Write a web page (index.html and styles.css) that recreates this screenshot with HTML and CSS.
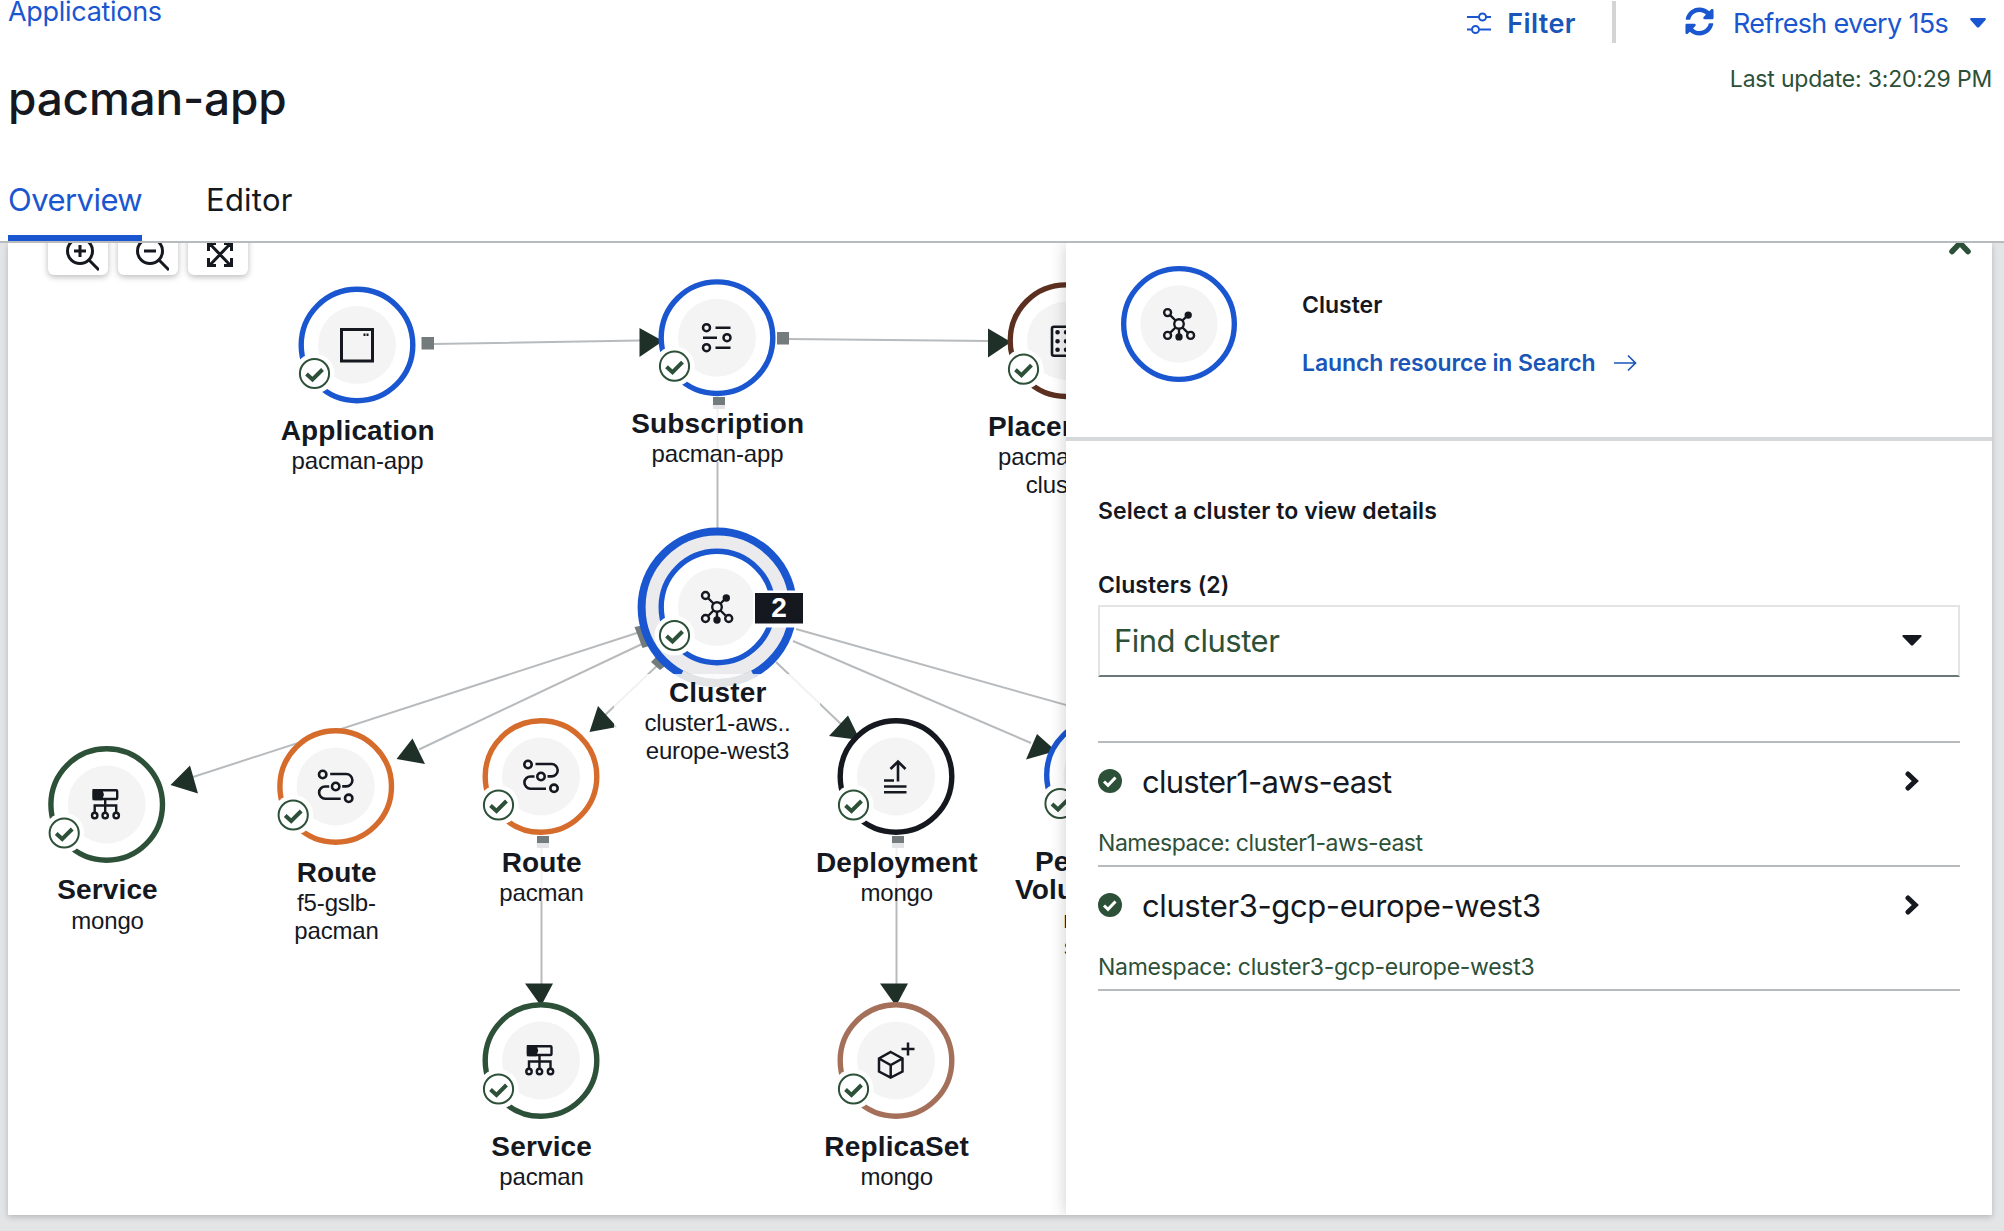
FILE: index.html
```html
<!DOCTYPE html>
<html lang="en">
<head>
<meta charset="utf-8">
<title>pacman-app</title>
<link rel="stylesheet" href="styles.css">
</head>
<body>
<header class="page-header">
  <div class="heading">
    <a class="breadcrumb">Applications</a>
    <h1 class="title">pacman-app</h1>
    <nav class="tabs">
      <a class="tab tab-active">Overview</a>
      <a class="tab tab-editor">Editor</a>
    </nav>
  </div>
  <div class="tools">
    <div class="actions">
      <svg class="icon-filter" width="26" height="24" viewBox="0 0 26 24" fill="none" stroke="currentColor" stroke-width="2"><path d="M1 6H12.500M20 6H25M1 18.500H5.500M13.500 18.500H25"/><circle cx="16.500" cy="6" r="3.500"/><circle cx="9.500" cy="18.500" r="3.500"/></svg>
      <span class="filter">Filter</span>
      <span class="separator"></span>
      <svg class="icon-sync" width="29" height="29" viewBox="0 0 512 512" fill="currentColor"><path d="M370.720 133.280C339.458 104.008 298.888 87.962 255.848 88c-77.458.068-144.328 53.178-162.791 126.850-1.344 5.363-6.122 9.150-11.651 9.150H24.103c-7.498 0-13.194-6.807-11.807-14.176C33.933 94.924 134.813 8 256 8c66.448 0 126.791 26.136 171.315 68.685L463.030 40.970C478.149 25.851 504 36.559 504 57.941V192c0 13.255-10.745 24-24 24H345.941c-21.382 0-32.090-25.851-16.971-40.971l41.750-41.749zM32 296h134.059c21.382 0 32.090 25.851 16.971 40.971l-41.750 41.750c31.262 29.273 71.835 45.319 114.876 45.280 77.418-.070 144.315-53.144 162.787-126.849 1.344-5.363 6.122-9.150 11.651-9.150h57.304c7.498 0 13.194 6.807 11.807 14.176C478.067 417.076 377.187 504 256 504c-66.448 0-126.791-26.136-171.315-68.685L48.970 471.030C33.851 486.149 8 475.441 8 454.059V320c0-13.255 10.745-24 24-24z"/></svg>
      <span class="refresh">Refresh every 15s</span>
      <svg class="icon-caret" width="16" height="10" viewBox="0 0 16 10" fill="currentColor"><path d="M1 0H15Q16.500.5 15.500 2L9 9.300Q8 10.200 7 9.300L.5 2Q-.5.5 1 0Z"/></svg>
    </div>
    <div class="updated">Last update: 3:20:29 PM</div>
  </div>
</header>

<main class="content">
  <section class="card">
    <div class="canvas">
      <div class="zoom-tools">
        <button class="tool" aria-label="Zoom in"><svg width="34" height="34" viewBox="0 0 34 34" fill="none" stroke="currentColor" stroke-width="3"><circle cx="15" cy="14" r="12.500"/><path d="M24 23L34 33M9 14H21M15 8V20"/></svg></button>
        <button class="tool" aria-label="Zoom out"><svg width="34" height="34" viewBox="0 0 34 34" fill="none" stroke="currentColor" stroke-width="3"><circle cx="15" cy="14" r="12.500"/><path d="M24 23L34 33M9 14H21"/></svg></button>
        <button class="tool" aria-label="Fit to screen"><svg width="34" height="34" viewBox="2 -1 34 34" fill="none" stroke="currentColor" stroke-width="3"><path d="M6 5L28 28M28 5L6 28M5.500 13V5.500H13M21 5.500H28.500V13M28.500 20V27.500H21M13 27.500H5.500V20"/></svg></button>
      </div>
      <svg class="graph" width="1058" height="972" viewBox="8 243 1058 972">
        <defs>
          <g id="base"><circle r="55.800" fill="#fff" stroke="currentColor" stroke-width="5.400"/><circle r="39" fill="#f4f4f5"/></g>
          <g id="ok"><circle cx="-42.500" cy="28.500" r="20" fill="#fff"/><circle cx="-42.500" cy="28.500" r="14.600" fill="#fff" stroke="#2d5038" stroke-width="2"/><path d="M-50.500 29L-44.500 34.500L-34.500 24.500" fill="none" stroke="#2d5038" stroke-width="4"/></g>
          <g id="i-cluster" fill="none" stroke="#15181f" stroke-width="2.400"><path d="M-8.500-8.500L-3.500-3.500M3.500-3.500L9-9M-3.500 3.500L-8.500 8.500M3.500 3.500L8.500 8.500M0 4.500V12"/><circle r="4.800"/><circle cx="-11.500" cy="-11.500" r="3.500"/><circle cx="-11.500" cy="11.500" r="3.500"/><circle cx="11.700" cy="11.500" r="3.500"/><circle cx="9.300" cy="-9" r="2.500" fill="#15181f"/><circle cy="13" r="2.500" fill="#15181f"/></g>
          <g id="i-service" fill="none" stroke="#15181f" stroke-width="2.400"><rect x="-13" y="-14.300" width="23.500" height="8.800" rx="1"/><path d="M-13-14.300h7.500l1.500 4.400-1.500 4.400h-7.500z" fill="#15181f"/><path d="M-1.500-5V8M-12 8V1H9.500V8"/><circle cx="-12" cy="11" r="2.700"/><circle cx="-1.500" cy="11" r="2.700"/><circle cx="9.500" cy="11" r="2.700"/></g>
          <g id="i-route" fill="none" stroke="#15181f" stroke-width="2.600"><circle cx="-13" cy="-12" r="3.700"/><circle r="3.700"/><circle cx="13" cy="11.800" r="3.700"/><path d="M-5.500-12.500H10.500a6.200 6.200 0 0 1 0 12.400H6.500M-6.500 0H-10.500a6 6 0 0 0 0 12.200H5"/></g>
        </defs>

        <g class="edges">
          <path d="M433 344L640 340.500M788 339L989 341M717.500 405V530M640 632L193 777M642 644L419 749.500M661 662L603 717M776 662L842 725M793 641L1031 743M796 629L1080 709M541.500 843V985M896.500 843V985"/>
        </g>
        <g class="joints">
          <path d="M421.500 337h12.500v12.500h-12.500zM777 332h12v12.500h-12zM713 397h12v12h-12zM537 836h12v12h-12zM892 836h12v12h-12z"/>
          <path d="M634.500 627l10-2 8 20-10 3zM651 662l8-8 10 9-9 7z"/>
        </g>
        <g class="arrows">
          <path d="M639.500 328V357L663 341ZM988 328.500V357.500L1011 342ZM170.500 785L190 765.500L198 793.500ZM396.500 759L412.500 738.500L425 764ZM589.500 732L598 706L617 727ZM860 740L848 715.500L829 736ZM1056 751L1037 734L1026 759.500ZM525 983.500H553L541 1006ZM880 983.500H908L896 1006Z"/>
        </g>

        <circle cx="717.300" cy="607.300" r="75.700" fill="#ebebed" stroke="#1a56cf" stroke-width="8"/>

        <g transform="translate(357 345)" color="#1a56cf"><use href="#base"/><use href="#ok"/><g fill="none" stroke="#15181f" stroke-width="3"><rect x="-15.500" y="-15.500" width="31" height="31.500"/><path d="M6.500-10.300h2M9.500-10.300h2" stroke-width="2.500"/></g></g>
        <g transform="translate(717 337.700)" color="#1a56cf"><use href="#base"/><use href="#ok"/><g fill="none" stroke="#15181f" stroke-width="2.500"><circle cx="-10.500" cy="-10" r="3.500"/><circle cx="10" cy="0" r="3.500"/><circle cx="-10.500" cy="10" r="3.500"/><path d="M-1.500-10H13.500M-14 0H0M-1.500 10H13.500"/></g></g>
        <g transform="translate(1066 340.700)" color="#5c3020"><use href="#base"/><use href="#ok"/><rect x="-14" y="-14" width="28" height="29" rx="2" fill="none" stroke="#15181f" stroke-width="2.600"/><path d="M-8.500-8.500h.1M0-8.500h.1M8.500-8.500h.1M-8.500.5h.1M0 .5h.1M8.500.5h.1M-8.500 9h.1M0 9h.1M8.500 9h.1" stroke="#15181f" stroke-width="4.500" stroke-linecap="round"/></g>
        <g transform="translate(717 607)" color="#1a56cf"><use href="#base"/><use href="#ok"/><use href="#i-cluster"/></g>
        <g transform="translate(106.700 804.500)" color="#2d5038"><use href="#base"/><use href="#ok"/><use href="#i-service"/></g>
        <g transform="translate(335.700 786.500)" color="#d66c2c"><use href="#base"/><use href="#ok"/><use href="#i-route"/></g>
        <g transform="translate(541 776.500)" color="#d66c2c"><use href="#base"/><use href="#ok"/><use href="#i-route"/></g>
        <g transform="translate(896 776.500)" color="#15181f"><use href="#base"/><use href="#ok"/><path d="M2 5V-14M-5.500-7.500L2-15L9.500-7.500M-12 4H-2M-12 10H10.500M-12 15.700H10.500" fill="none" stroke="#15181f" stroke-width="2.600"/></g>
        <g transform="translate(1102.500 775)" color="#1a56cf"><use href="#base"/><use href="#ok"/></g>
        <g transform="translate(541 1060.500)" color="#2d5038"><use href="#base"/><use href="#ok"/><use href="#i-service"/></g>
        <g transform="translate(896 1060.500)" color="#a5705a"><use href="#base"/><use href="#ok"/><path d="M-5.300-8.500L6.500-2V11L-5.300 17L-17 11V-2ZM-17-2L-5.300 4.500L6.500-2M-5.300 4.500V17M12-18V-5M5.500-11.500H18.500" fill="none" stroke="#15181f" stroke-width="2.500"/></g>

        <g class="count"><rect x="753" y="590.500" width="53" height="37" fill="#fff"/><rect x="755" y="593" width="48" height="30.500"/><text x="779" y="617">2</text></g>

        <g class="masks">
          <rect x="614" y="405" width="206" height="57"/><rect x="614" y="674" width="206" height="86"/>
          <rect x="438" y="843" width="206" height="58"/><rect x="793" y="843" width="206" height="58"/>
        </g>
        <path class="ring-foot" d="M681.500 674A75.700 75.700 0 0 0 753 674"/>
        <g class="names">
          <text x="357.700" y="440">Application</text><text x="717.700" y="433">Subscription</text><text x="1066.500" y="436">Placements</text>
          <text x="717.700" y="702">Cluster</text><text x="107.500" y="899">Service</text><text x="336.700" y="881.500">Route</text>
          <text x="541.700" y="871.500">Route</text><text x="896.800" y="871.500">Deployment</text><text x="1103.500" y="871">Persistent</text><text x="1103.500" y="898.500">VolumeClaim</text>
          <text x="541.700" y="1156">Service</text><text x="896.700" y="1156">ReplicaSet</text>
        </g>
        <g class="labels">
          <text x="357.500" y="469">pacman-app</text><text x="717.500" y="462">pacman-app</text><text x="1064" y="465">pacman-app</text><text x="1064.500" y="493">cluster-</text>
          <text x="717.500" y="731">cluster1-aws..</text><text x="717.500" y="759">europe-west3</text><text x="107.500" y="928.500">mongo</text>
          <text x="336.500" y="911">f5-gslb-</text><text x="336.500" y="939">pacman</text><text x="541.500" y="901">pacman</text><text x="896.700" y="901">mongo</text>
          <text x="1103.500" y="928">mongo-</text><text x="1103.500" y="955">storage</text>
          <text x="541.500" y="1185">pacman</text><text x="896.700" y="1185">mongo</text>
        </g>
      </svg>
    </div>

    <aside class="panel">
      <svg class="collapse" width="24" height="16" viewBox="0 0 24 16" fill="none" stroke="currentColor" stroke-width="5.500" stroke-linecap="round"><path d="M4 12.500L12 4L20 12.500"/></svg>
      <div class="panel-head">
        <svg width="116" height="116" viewBox="-58.500 -58.500 117 117" color="#1a56cf"><use href="#base"/><use href="#i-cluster"/></svg>
        <div class="panel-info">
          <span class="kind">Cluster</span>
          <a class="launch"><span>Launch resource in Search</span>
            <svg width="23" height="18" viewBox="0 0 23 18" fill="none" stroke="currentColor" stroke-width="1.700"><path d="M0 9H21.500M14 1.500L21.500 9L14 16.500"/></svg></a>
        </div>
      </div>
      <div class="panel-body">
        <h2 class="prompt">Select a cluster to view details</h2>
        <h3 class="list-label">Clusters (2)</h3>
        <div class="select"><span>Find cluster</span>
          <svg width="20" height="11" viewBox="0 0 20 11" fill="currentColor"><path d="M1.500 0H18.500Q20.500.5 19 2L11 10.300Q10 11.200 9 10.300L1 2Q-.5.5 1.500 0Z"/></svg></div>
        <ul class="clusters">
          <li class="cluster">
            <div class="cluster-row">
              <svg width="24" height="24" viewBox="0 0 24 24"><circle cx="12" cy="12" r="12" fill="#2d5038"/><path d="M6 12.500L10 16.300L17.500 8.500" fill="none" stroke="#fff" stroke-width="3"/></svg>
              <span class="cluster-name name-short">cluster1-aws-east</span>
              <svg class="chevron" width="14" height="20" viewBox="0 0 14 20" fill="none" stroke="currentColor" stroke-width="5" stroke-linecap="round"><path d="M3 3L10.300 10L3 17"/></svg>
            </div>
            <div class="namespace namespace-short">Namespace: cluster1-aws-east</div>
          </li>
          <li class="cluster">
            <div class="cluster-row">
              <svg width="24" height="24" viewBox="0 0 24 24"><circle cx="12" cy="12" r="12" fill="#2d5038"/><path d="M6 12.500L10 16.300L17.500 8.500" fill="none" stroke="#fff" stroke-width="3"/></svg>
              <span class="cluster-name">cluster3-gcp-europe-west3</span>
              <svg class="chevron" width="14" height="20" viewBox="0 0 14 20" fill="none" stroke="currentColor" stroke-width="5" stroke-linecap="round"><path d="M3 3L10.300 10L3 17"/></svg>
            </div>
            <div class="namespace">Namespace: cluster3-gcp-europe-west3</div>
          </li>
        </ul>
      </div>
    </aside>
  </section>
</main>
</body>
</html>
```

FILE: styles.css
```css
* { box-sizing: border-box; }

body {
  margin: 0;
  width: 2004px;
  height: 1231px;
  overflow: hidden;
  background: #fff;
  color: #15181f;
  font-family: Inter, "Open Sans", sans-serif;
}

h1, h2, h3, ul { margin: 0; padding: 0; font-weight: inherit; }

.page-header {
  display: flex;
  justify-content: space-between;
  height: 243px;
  padding: 0 12px 0 8px;
  border-bottom: 2px solid #b8bbbe;
}

.heading { display: flex; flex-direction: column; }
.breadcrumb { padding-top: 1px; font-size: 27px; line-height: 22px; letter-spacing: -.3px; color: #1a56cf; }
.title { margin-top: 45px; font-size: 46px; line-height: 60px; font-weight: 550; letter-spacing: -.2px; }
.tabs { display: flex; gap: 65px; margin-top: auto; }
.tab { width: 134px; padding-bottom: 15px; border-bottom: 6px solid transparent; font-size: 31px; line-height: 40px; letter-spacing: -.55px; white-space: nowrap; }
.tab-active { color: #1a56cf; border-color: #1a56cf; }
.tab-editor { width: auto; letter-spacing: .25px; margin-left: -1px; }

.tools { display: flex; flex-direction: column; align-items: flex-end; }
.actions { display: flex; align-items: center; height: 46px; padding-right: 6px; color: #1a56cf; font-size: 27px; white-space: nowrap; }
.filter { margin-left: 15px; font-weight: 600; letter-spacing: .4px; color: #1a56b8; }
.separator { width: 4px; height: 42px; margin: -2px 69px 0 36px; background: #d2d4d6; }
.icon-sync { margin-bottom: 4px; }
.refresh { margin-left: 19px; letter-spacing: -.68px; }
.icon-caret { margin-left: 22px; }
.updated { margin-top: 19px; font-size: 23px; line-height: 28px; letter-spacing: -.2px; color: #2d5038; white-space: nowrap; }

.content { height: 988px; padding: 0 12px 16px 8px; background: #e3e4e6; }
.card { display: flex; height: 972px; background: #fff; box-shadow: 0 2px 6px rgba(0, 0, 0, .2); clip-path: inset(0 -12px -16px -8px); }

.canvas { position: relative; flex: 1; min-width: 0; overflow: hidden; }
.graph { display: block; }
.zoom-tools { position: absolute; top: -28px; left: 40px; display: flex; gap: 10px; }
.tool { width: 60px; height: 60px; padding: 21px 9px 0 17px; border: 0; border-radius: 6px; background: #fff; color: #15181f; box-shadow: 0 2px 6px rgba(0, 0, 0, .28); }

.edges { fill: none; stroke: #b8bbbe; stroke-width: 2; }
.joints { fill: #737b7d; }
.arrows { fill: #1f3029; }
.masks { fill: #fff; opacity: .8; }
.ring-foot { fill: none; stroke: #e3e4e6; stroke-width: 8; }
.graph text { font-family: "Liberation Sans", Arial, sans-serif; text-anchor: middle; }
.names, .count { font-size: 28px; font-weight: 700; fill: #15181f; }
.names { letter-spacing: .15px; }
.labels { font-size: 24px; letter-spacing: -.15px; fill: #15181f; }
.count text { fill: #fff; }

.panel { position: relative; width: 926px; background: #fff; box-shadow: 0 0 16px rgba(0, 0, 0, .2); clip-path: inset(0 0 0 -20px); }
.collapse { position: absolute; top: -4px; right: 20px; color: #2d5038; }
.panel-head { display: flex; gap: 65px; height: 198px; padding: 23px 0 0 55px; border-bottom: 4px solid #d6d8da; }
.panel-info { display: flex; flex-direction: column; gap: 28px; padding-top: 24px; font-size: 23px; line-height: 30px; font-weight: 600; }
.launch { display: flex; align-items: center; gap: 18px; letter-spacing: -.1px; color: #1a56b8; white-space: nowrap; }
.panel-body { padding: 55px 32px 0; }
.prompt { font-size: 23px; line-height: 30px; font-weight: 600; letter-spacing: .07px; }
.list-label { margin-top: 44px; font-size: 23px; line-height: 30px; font-weight: 600; letter-spacing: .1px; }
.select { display: flex; align-items: center; justify-content: space-between; height: 72px; margin-top: 5px; padding: 0 36px 2px 14px; border: 2px solid #e3e4e6; border-bottom-color: #6c7877; font-size: 31px; letter-spacing: -.5px; color: #2d5038; }
.select svg { color: #15181f; }
.clusters { margin-top: 64px; border-top: 2px solid #b8bbbe; list-style: none; }
.cluster { height: 124px; padding-top: 18px; border-bottom: 2px solid #b8bbbe; }
.cluster-row { display: flex; align-items: center; padding-right: 41px; font-size: 31px; line-height: 40px; letter-spacing: -.4px; }
.cluster-name { margin: 1px 0 -1px 20px; white-space: nowrap; }
.name-short { letter-spacing: -.75px; }
.chevron { margin-left: auto; }
.namespace { margin-top: 28px; font-size: 23px; line-height: 28px; letter-spacing: -.27px; color: #2d5038; }
.namespace-short { letter-spacing: -.45px; }
```
